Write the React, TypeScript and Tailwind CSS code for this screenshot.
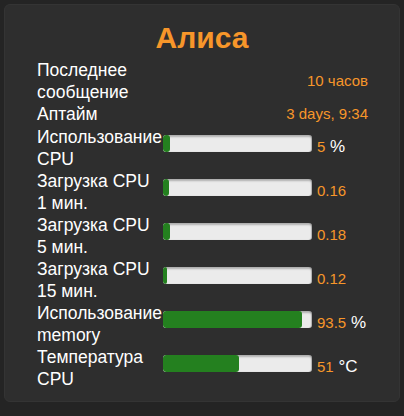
import React from 'react';

type Row = {
  label: string[];
  value: string;
  unit?: string;
  pct?: number;
  text?: boolean;
};

const ROWS: Row[] = [
  { label: ['Последнее', 'сообщение'], value: '10 часов', text: true },
  { label: ['Аптайм'], value: '3 days, 9:34', text: true },
  { label: ['Использование', 'CPU'], value: '5', unit: '%', pct: 5 },
  { label: ['Загрузка CPU', '1 мин.'], value: '0.16', pct: 4 },
  { label: ['Загрузка CPU', '5 мин.'], value: '0.18', pct: 4.5 },
  { label: ['Загрузка CPU', '15 мин.'], value: '0.12', pct: 3 },
  { label: ['Использование', 'memory'], value: '93.5', unit: '%', pct: 93.5 },
  { label: ['Температура', 'CPU'], value: '51', unit: '°C', pct: 51 },
];

function Bar({ pct }: { pct: number }) {
  return (
    <div className="mt-[9px] h-[17px] w-[149px] rounded-[3px] bg-[#ebebeb] overflow-hidden shadow-[inset_0_2px_2px_rgba(0,0,0,0.25),inset_-1px_0_1px_rgba(0,0,0,0.2)]">
      <div className="h-full rounded-[3px] bg-[#24801f]" style={{ width: `${pct}%` }} />
    </div>
  );
}

export default function App() {
  return (
    <div
      className="w-[404px] h-[416px] bg-[#242424] p-[4px]"
      style={{ fontFamily: '"Liberation Sans", Arial, sans-serif' }}
    >
      <div className="w-[396px] h-[398px] rounded-[6px] bg-[#2e2e2e] border border-[#343434] pt-[15px]">
        <h1 className="text-center text-[30px] leading-[36px] font-bold text-[#f7962a] mb-[3px]">
          Алиса
        </h1>

        <div className="ml-[32px] w-[331px] grid grid-cols-[126px_149px_1fr]">
          {ROWS.map((r, i) => (
            <React.Fragment key={i}>
              <div className="text-[17.5px] leading-[22px] text-white">
                {r.label.map((l, j) => (
                  <div key={j} className="whitespace-nowrap">{l}</div>
                ))}
              </div>
              {r.text ? (
                <div className="col-span-2 flex items-center justify-end text-[15px] text-[#f7962a]">
                  {r.value}
                </div>
              ) : (
                <>
                  <Bar pct={r.pct ?? 0} />
                  <div className="mt-[10px] pl-[5px] leading-[22px] whitespace-nowrap">
                    <span className="text-[15px] text-[#f7962a]">{r.value}</span>
                    {r.unit && <span className="text-[17px] text-white"> {r.unit}</span>}
                  </div>
                </>
              )}
            </React.Fragment>
          ))}
        </div>
      </div>
    </div>
  );
}
